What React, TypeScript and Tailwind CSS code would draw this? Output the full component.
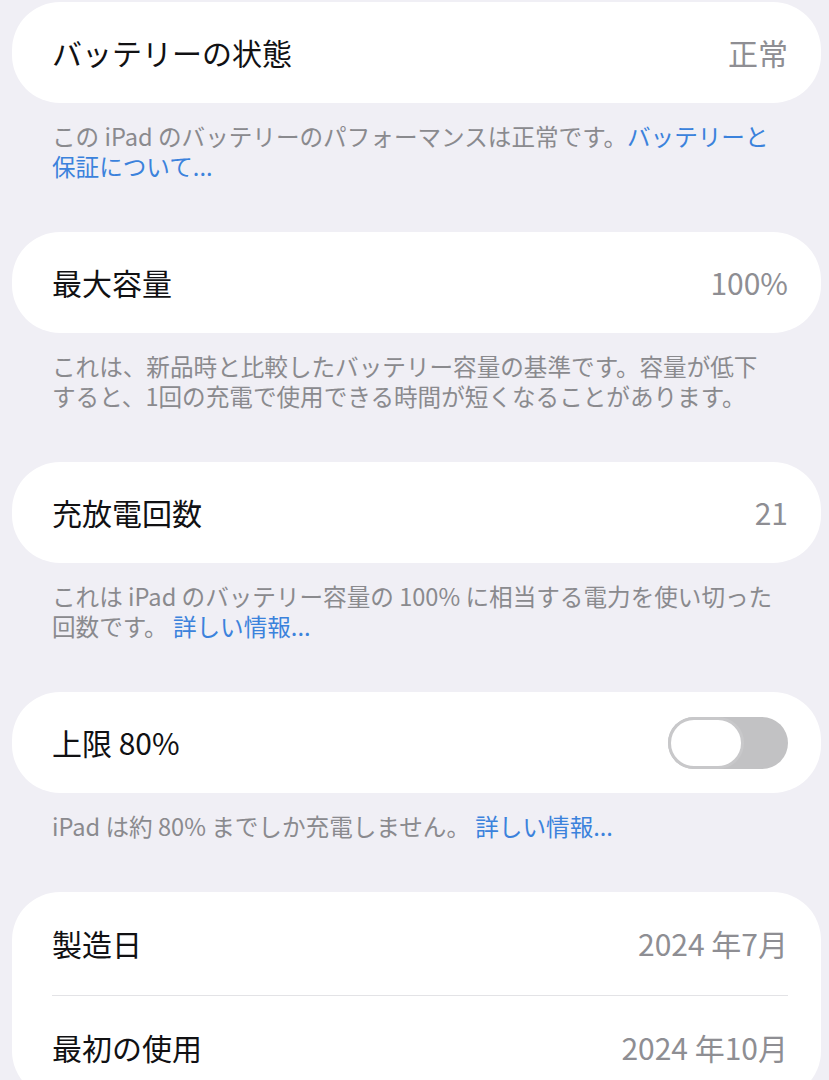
import React from 'react';

const font = { fontFamily: '"Noto Sans CJK JP", "Noto Sans", sans-serif' };

const Row: React.FC<{ label: string; value?: string; children?: React.ReactNode; h?: string }> = ({ label, value, children }) => (
  <div className="flex h-[101px] items-center justify-between pl-[40px] pr-[33px]">
    <span className="text-[30px] font-normal text-[#111113]">{label}</span>
    {value && <span className="text-[30px] text-[#8e8e93]">{value}</span>}
    {children}
  </div>
);

const Card: React.FC<{ children: React.ReactNode }> = ({ children }) => (
  <div className="ml-[12px] mr-[8px] rounded-[48px] bg-white">{children}</div>
);

const Footer: React.FC<{ children: React.ReactNode }> = ({ children }) => (
  <p className="pl-[52px] pr-[40px] pt-[18px] pb-[51px] text-[23.6px] leading-[30px] text-[#8a8a8e]">{children}</p>
);

const Link: React.FC<{ children: React.ReactNode }> = ({ children }) => (
  <span className="text-[#3b82dc]">{children}</span>
);

const Toggle = () => (
  <div className="flex h-[52px] w-[120px] items-center rounded-full bg-[#c2c2c4]">
    <div className="h-[52px] w-[76px] rounded-full border-[3px] border-[#c8c8ca] bg-white" />
  </div>
);

export default function App() {
  return (
    <div className="min-h-screen overflow-hidden bg-[#f0eff5] pt-[2px]" style={font}>
      <Card>
        <Row label="バッテリーの状態" value="正常" />
      </Card>
      <Footer>
        この iPad のバッテリーのパフォーマンスは正常です。<Link>バッテリーと<br />保証について...</Link>
      </Footer>

      <Card>
        <Row label="最大容量" value="100%" />
      </Card>
      <Footer>
        これは、新品時と比較したバッテリー容量の基準です。容量が低下<br />
        すると、1回の充電で使用できる時間が短くなることがあります。
      </Footer>

      <Card>
        <Row label="充放電回数" value="21" />
      </Card>
      <Footer>
        これは iPad のバッテリー容量の 100% に相当する電力を使い切った<br />
        回数です。 <Link>詳しい情報...</Link>
      </Footer>

      <Card>
        <Row label="上限 80%">
          <Toggle />
        </Row>
      </Card>
      <Footer>
        iPad は約 80% までしか充電しません。 <Link>詳しい情報...</Link>
      </Footer>

      <Card>
        <div className="flex h-[103px] items-center justify-between pl-[40px] pr-[33px]">
          <span className="text-[30px] font-normal text-[#111113]">製造日</span>
          <span className="text-[30px] text-[#8e8e93]">2024 年7月</span>
        </div>
        <div className="ml-[40px] mr-[33px] h-px bg-[#e3e3e6]" />
        <div className="flex h-[103px] items-center justify-between pl-[40px] pr-[33px]">
          <span className="text-[30px] font-normal text-[#111113]">最初の使用</span>
          <span className="text-[30px] text-[#8e8e93]">2024 年10月</span>
        </div>
      </Card>
    </div>
  );
}
